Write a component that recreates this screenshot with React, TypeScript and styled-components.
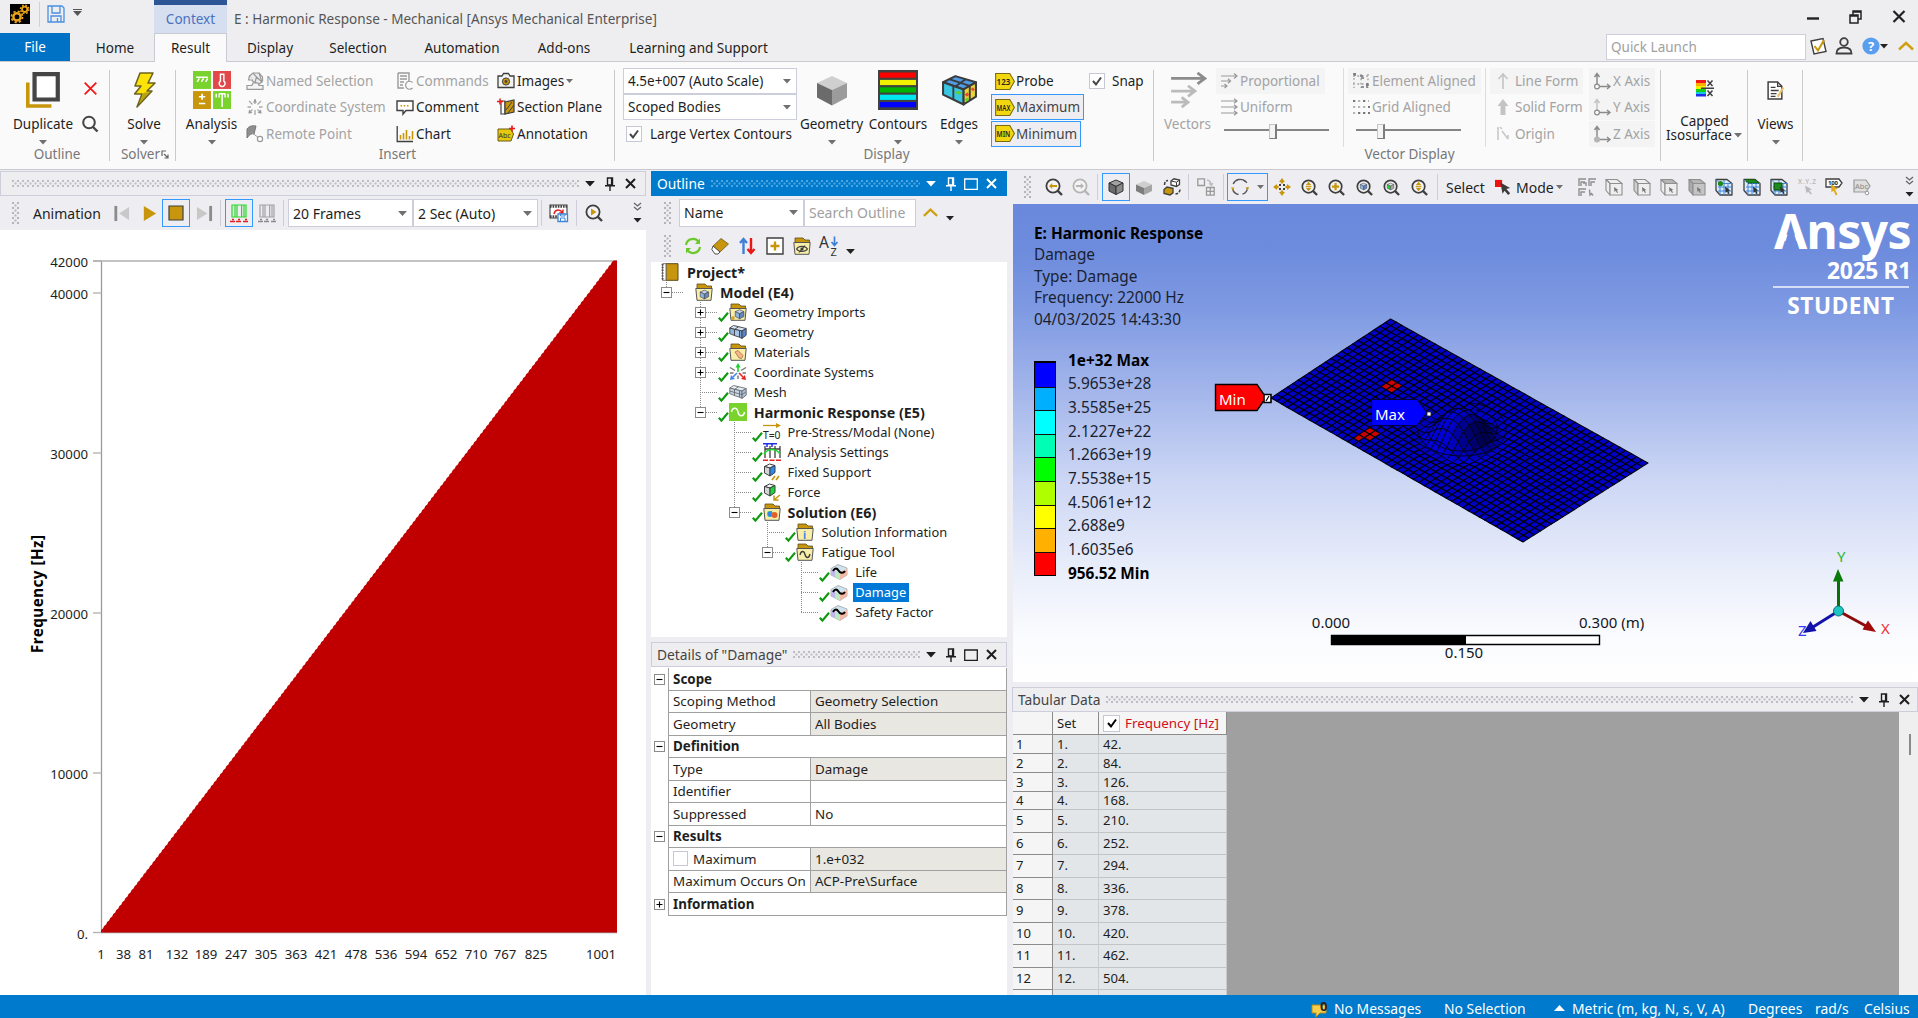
import React from "react";
import styled, { createGlobalStyle, css } from "styled-components";

const UI = `"Noto Sans", "Open Sans", "Liberation Sans", sans-serif`;
const GOLD = "#c8960c";
const INK = "#3f3f3f";
const MUTE = "#a3a3a3";

const Global = createGlobalStyle`
  * { box-sizing: border-box; }
  html, body { margin: 0; padding: 0; }
  body { width: 1918px; height: 1018px; overflow: hidden; background: #eeeef2; font-family: ${UI}; font-size: 13.5px; color: #1e1e1e; }
  svg { display: block; flex: none; overflow: visible; }
`;

/* ---------- icons ---------- */

const Cube = ({ top = "#bdd4f0", left = "#8fb2dd", right = "#5f8ac4", stroke = INK }) => (
  <g stroke={stroke} strokeWidth="1" strokeLinejoin="round">
    <path d="M2 5 9 2 16 5 9 8.5Z" fill={top} />
    <path d="M2 5 9 8.5V16.5L2 13Z" fill={left} />
    <path d="M16 5 9 8.5V16.5L16 13Z" fill={right} />
  </g>
);

const Folder = ({ children }: { children?: React.ReactNode }) => (
  <>
    <path d="M2 1H10L12 3H16.5V6H2Z" fill={GOLD} stroke="#5a4a1a" strokeWidth=".8" />
    <path d="M.8 5.5H17.2L16 17.3H2Z" fill="#f8eeaa" stroke="#555" strokeWidth="1" />
    {children}
  </>
);

const Mag = ({ c = INK, children }: { c?: string; children?: React.ReactNode }) => (
  <>
    <circle cx="8" cy="8" r="6.6" fill="#f3f3f3" stroke={c} strokeWidth="1.8" />
    <path d="M12.6 12.6 17 17" stroke={c} strokeWidth="2.4" />
    {children}
  </>
);

const Tag = ({ children }: { children: string }) => (
  <>
    <path d="M.6 1.5H14L18.4 9 14 16.5H.6Z" fill="#f2d60e" stroke="#7a6a10" strokeWidth="1" />
    <text x="1.5" y="12" fontSize="8" fontWeight="600" fontFamily={UI} fill="#222" textLength="13" lengthAdjust="spacingAndGlyphs">{children}</text>
  </>
);

const SelBox = ({ fill = "#eee", top = "#eee", pick = "" }) => (
  <g stroke="#8f8f8f" strokeWidth="1.1" strokeLinejoin="round">
    <path d="M1 1.5H12L17 5.5H5Z" fill={top} />
    <path d="M1 1.5 5 5.5V17L1 12.5Z" fill={pick || "#eee"} />
    <path d="M5 5.5H17V17H5Z" fill={fill} />
    <path d="M9 9 9.5 14 10.8 12.8 12 15 13 14.4 11.8 12.2 13.4 12Z" fill="#777" stroke="none" />
  </g>
);

const MeshBox = ({ hit }: { hit: "node" | "face" | "elem" }) => (
  <g strokeLinejoin="round">
    <path d="M1 1.5H12L17 5.5V17H5L1 12.5Z" fill="#dcebfa" stroke={INK} strokeWidth="1.3" />
    <path d="M5 5.5H17M5 5.5V17M5 5.5 1 1.5M9 2V17M13 5V17M3 9H17M3 13H17" fill="none" stroke="#3f86d8" strokeWidth="1" />
    {hit === "node" && <circle cx="5.5" cy="5.5" r="2.6" fill="#1c8a1c" />}
    {hit === "face" && <path d="M2 1.5H12L16 5H5Z" fill="#1c8a1c" stroke="#0b4d0b" strokeDasharray="1.5 1" />}
    {hit === "elem" && <path d="M4 5H12V12H4Z" fill="#1c8a1c" stroke="#0b4d0b" />}
    <path d="M10 8.5 10.6 15 12.2 13.4 13.4 16 14.6 15.4 13.4 12.8 15.4 12.6Z" fill="#333" />
  </g>
);

const Wave = () => (
  <>
    <path d="M1 5.5 8 1.5 17 5 17 12 10 16.5 1 12Z" fill="#cfe3ee" stroke="#999" strokeWidth=".7" />
    <path d="M1 5.5V12L5 14V8Z" fill="#c3b6ec" />
    <path d="M10 9V16.5L17 12V6Z" fill="#f3b9a4" />
    <path d="M5 8V14L10 16.5V10Z" fill="#b8ecc0" />
    <path d="M3 8C5 4.5 7 5 8.5 7.5S13 11 15 8" fill="none" stroke="#000" strokeWidth="2" />
  </>
);

const Support = ({ face }: { face: string }) => (
  <g strokeLinejoin="round">
    <path d="M1.5 3.5 6.5 1 12 2.5 7 5Z" fill="#f4f4f4" stroke={INK} />
    <path d="M1.5 3.5V10L7 13V5Z" fill="#d5d5d5" stroke={INK} />
    <path d="M7 5 12 2.5V9.5L7 13Z" fill={face} stroke={INK} />
  </g>
);

const Film = ({ c, b }: { c: string; b: string }) => (
  <>
    <path d="M2 1H16V13H2ZM7 1V13M11.6 1V13M5 1V13M14 1V13" fill="none" stroke={c} strokeWidth="1.2" />
    <path d="M0 17.5H5M6 17.5H11M13 17.5H18M2 15.5H4M8 15.5H10M15 15.5H17" stroke={b} strokeWidth="1.6" />
  </>
);

const AxisArrows = ({ u, dot }: { u: string; dot?: boolean }) => (
  <>
    <path d="M4 14V2M1.5 5 4 1.5 6.5 5" fill="none" stroke={u} strokeWidth="1.5" />
    <path d="M6 14.5H17M14 12 17 14.5 14 17" fill="none" stroke="#8a8a8a" strokeWidth="1.4" />
    <circle cx="4" cy="14.5" r="2.4" fill={dot ? "#b5b5b5" : "#fafafa"} stroke={dot ? "#b5b5b5" : "#8a8a8a"} strokeWidth="1.2" />
  </>
);

const ICONS: Record<string, React.ReactNode> = {
  gears: (
    <>
      <path d="M0 0H18V18H0Z" fill="#000" />
      <circle cx="6.3" cy="11.6" r="3.3" fill="none" stroke="#e8a21c" strokeWidth="2.2" />
      <circle cx="6.3" cy="11.6" r="5" fill="none" stroke="#e8a21c" strokeWidth="1.6" strokeDasharray="2 1.93" />
      <circle cx="13.2" cy="4.8" r="2.4" fill="none" stroke="#e8a21c" strokeWidth="1.6" />
      <circle cx="13.2" cy="4.8" r="3.8" fill="none" stroke="#e8a21c" strokeWidth="1.3" strokeDasharray="1.6 1.4" />
    </>
  ),
  save: (
    <g fill="none" stroke="#4a8fe0" strokeWidth="1.3">
      <path d="M1 1H15L17 3V17H1Z" />
      <path d="M5 1V8H13V1M4 17V11H14V17M10.5 13V17" />
    </g>
  ),
  duplicate: (
    <>
      <path d="M1.8 5.5V16.6H13" fill="none" stroke={GOLD} strokeWidth="1.7" />
      <path d="M5 1.5H16V13.5H5Z" fill="#fff" stroke="#454545" strokeWidth="2" />
    </>
  ),
  redx: <path d="M3.5 3.5 14.5 14.5M14.5 3.5 3.5 14.5" stroke="#f01818" strokeWidth="1.7" />,
  search: (
    <>
      <circle cx="8" cy="7.5" r="5.8" fill="none" stroke="#444" strokeWidth="2" />
      <path d="M12 12 16.5 16.5" stroke="#444" strokeWidth="2.4" />
    </>
  ),
  bolt: (
    <>
      <path d="M7 .5H13.5L11 5.5H14.5L10.5 9.5H13L5.5 17.5 8 11H4.3L7.5 7H4.5Z" fill="#fbe30a" stroke="#6d6320" strokeWidth=".8" strokeLinejoin="round" />
      <path d="M12.2 10 6.6 16 8.8 10.4" fill="#8a7a18" opacity=".6" />
    </>
  ),
  analysis: (
    <>
      <path d="M0 0H8.5V8.5H0Z" fill="#79d32c" />
      <path d="M9.5 0H18V8.5H9.5Z" fill="#e0484a" />
      <path d="M0 9.5H8.5V18H0Z" fill={GOLD} />
      <path d="M9.5 9.5H18V18H9.5Z" fill="#79d32c" />
      <path d="M1.5 3H7M2 5.2 3 3.5M4 5.2 5 3.5M6 5.2 7 3.5" stroke="#fff" strokeWidth=".7" />
      <path d="M13 1.5H14.6V4.8A1.4 1.4 0 1 1 13 4.8Z" fill="none" stroke="#fff" strokeWidth=".7" />
      <path d="M2.8 12.2H5.8M4.3 10.8V13.6M2.8 15.4H5.8" stroke="#fff" strokeWidth=".8" />
      <path d="M11 12.5V10.8M12.4 12.5V10.8M13.8 17V10.8M15.2 12.5V10.8M16.6 12.5V10.8M12.3 10.8H15.3" stroke="#fff" strokeWidth=".7" />
    </>
  ),
  named: (
    <g fill="none" stroke="#999" strokeWidth="1.2">
      <path d="M3.5 4 7 1H13L16 10 13 12 7 9.5Z" fill="#ececec" />
      <path d="M7 1 10.5 5 16 10M10.5 5 9 10.5M13 1 16.5 5V9.5" />
      <path d="M3.5 4 2.5 8H7M1 13.5H6L7 11H12L13 13.5H17V17.3H1Z" fill="#f4f4f4" />
    </g>
  ),
  coord: (
    <>
      <path d="M9 1V6M9 12V17M1.5 9H5M13 9H16.5M3 3 6.5 6.5M15 3 11.5 6.5M3 15 6.5 11.5M15 15 11.5 11.5" stroke="#aaa" strokeWidth="1.4" />
      <path d="M9 1 11 4.5H7ZM2.5 15.5 3 11.5 6.5 15ZM15.5 15.5 11.5 15 15 11.5Z" fill="#999" />
    </>
  ),
  remote: (
    <>
      <path d="M1 4C3 1 6 .5 10 1L8 9C6 8 3 10 1 13Z" fill="#8f8f8f" stroke="#777" />
      <path d="M5 7 13 13" stroke="#999" />
      <circle cx="14" cy="14" r="2.6" fill="#fff" stroke="#999" strokeWidth="1.2" />
    </>
  ),
  commands: (
    <>
      <path d="M2 1H13V9M2 1V16H8M4 4H11M4 7H11M4 10H8M4 13H7" fill="none" stroke="#999" strokeWidth="1.4" />
      <path d="M16.5 10.5A4 4 0 1 0 16.5 16" fill="none" stroke="#999" strokeWidth="1.2" />
    </>
  ),
  comment: (
    <>
      <path d="M1 3H17V12.5H10L7 16V12.5H1Z" fill="#fff" stroke={INK} strokeWidth="1.4" />
      <path d="M4.5 7.7H14" stroke={GOLD} strokeWidth="1.4" strokeDasharray="1.6 1.6" />
    </>
  ),
  chart: (
    <>
      <path d="M1.2 1V16.5H17" fill="none" stroke={INK} strokeWidth="1.3" />
      <path d="M4.5 14.5V10M7.5 14.5V8M10.5 14.5V5M13.5 14.5V11M16.5 14.5V6" stroke={GOLD} strokeWidth="1.6" />
    </>
  ),
  images: (
    <>
      <path d="M1 4H5L6.5 1.5H11.5L13 4H17V15.5H1Z" fill="#f2f2f2" stroke={INK} strokeWidth="1.3" />
      <circle cx="9" cy="9.5" r="3.6" fill={GOLD} stroke={INK} />
      <circle cx="9" cy="9.5" r="1.4" fill="#444" />
    </>
  ),
  section: (
    <>
      <path d="M4 3H8V16H4Z" fill="#fff" stroke={INK} strokeWidth="1.2" />
      <path d="M8 4 17 2V14L8 16Z" fill={GOLD} stroke={INK} strokeWidth="1.2" />
      <path d="M9 12 15 4M11 15 17 7" stroke={INK} />
      <path d="M0 3.5H6M3 .5V6.5" stroke="#f01818" strokeWidth="1.5" />
    </>
  ),
  annotation: (
    <>
      <path d="M1 4H14L16.5 9 14 16H1Z" fill="#e7c70f" stroke="#6b5c10" />
      <text x="1.5" y="12.5" fontSize="7" fontFamily={UI} fill="#333">Abc</text>
      <path d="M12 3.5H18M15 .5V6.5" stroke="#f01818" strokeWidth="1.6" />
    </>
  ),
  geometryBig: (
    <>
      <path d="M1.5 5.5 9 2 16.5 5.5 9 9Z" fill="#cfcfcf" />
      <path d="M1.5 5.5 9 9V16.8L1.5 12.8Z" fill="#6b6b6b" />
      <path d="M16.5 5.5 9 9V16.8L16.5 12.8Z" fill="#9b9b9b" />
    </>
  ),
  edgesBig: (
    <g stroke="#3b3b3b" strokeWidth="1" strokeLinejoin="round">
      <path d="M1 5 7 2 17 5 11 8.5Z" fill="#4e9be6" />
      <path d="M1 5 11 8.5V15.8L1 11Z" fill="#39c6e2" />
      <path d="M11 8.5 17 5V12L11 15.8Z" fill="#e9d43a" />
      <path d="M6 6.8V13.4M4 3.5 14 6.8V13.9M7 7.1 12 3.5" fill="none" strokeWidth=".9" />
      <path d="M12 11.5 13.3 10.5M15 8.8 16 8" stroke="#e34b2a" strokeWidth="1.5" />
      <path d="M12 13.8 13.3 13M7.5 9.6 9.5 10.5" stroke="#5fd02c" strokeWidth="1.5" />
    </g>
  ),
  vectors: (
    <g fill="none" strokeWidth="1.3">
      <path d="M1 3.5H17M13.5.9 17 3.5 13.5 6.1" stroke="#8c8c8c" />
      <path d="M1 9.5H12M9 7 12.3 9.5 9 12" stroke="#bbb" />
      <path d="M1 14.8H8M6 12.5 9 14.8 6 17.1" stroke="#bbb" />
    </g>
  ),
  prop: (
    <g fill="none" stroke="#999" strokeWidth="1.2">
      <path d="M1 4H17M14 1.5 17 4 14 6.5M1 9H10M8 6.8 10.5 9 8 11.2M1 14H6M4.5 12 7 14 4.5 16" />
    </g>
  ),
  uniform: <path d="M1 3H17M14 .8 17 3 14 5.2M1 9H17M14 6.8 17 9 14 11.2M1 15H17M14 12.8 17 15 14 17.2" fill="none" stroke="#999" strokeWidth="1.2" />,
  elem: (
    <>
      <path d="M2 1.5V16M9 2V16M1 4H17M1 12H17M16 2V16" stroke="#b5b5b5" strokeWidth="1.8" strokeDasharray="1.8 2.6" />
      <path d="M1 2H4M3 1V4M8 4H11M9 6H12M14 13H17M15 11V16M9 15H12" stroke="#777" strokeWidth="1.5" />
    </>
  ),
  grid: (
    <>
      <path d="M1 3H17M1 9H17M1 15H17" stroke="#b5b5b5" strokeWidth="2.2" strokeDasharray="2.2 2.8" />
      <path d="M1 3H3.2M6 15H8.2M11 15H13.2M16 15H18M16 9H18M11 3H13.2" stroke="#777" strokeWidth="2.2" />
    </>
  ),
  line: <path d="M9 17V2M4.5 7 9 2 13.5 7" fill="none" stroke="#c4c4c4" strokeWidth="1.6" />,
  solid: <path d="M9 1 14.5 8H11.5V17H6.5V8H3.5Z" fill="#c4c4c4" />,
  origin: <path d="M4 3V15M3 3H5M8 6 14 14M8 4 6 2M14 14V10" fill="none" stroke="#c9c9c9" strokeWidth="1.6" />,
  axisX: <AxisArrows u="#8a8a8a" />,
  axisY: <AxisArrows u="#c4c4c4" />,
  axisZ: <AxisArrows u="#8a8a8a" dot />,
  capped: (
    <>
      <path d="M0 1H10V4H0Z" fill="#f01818" /><path d="M0 4H10V7H0Z" fill="#ffae00" />
      <path d="M0 7H10V10H0Z" fill="#f6f000" /><path d="M0 10H10V13H0Z" fill="#15d015" />
      <path d="M0 13H10V15H0Z" fill="#12c8e0" /><path d="M0 15H10V17.5H0Z" fill="#2030e8" />
      <path d="M5 9.2H18M11.5 1.5 16.5 7M16.5 1.5 11.5 7M11.5 11.5 16.5 17M16.5 11.5 11.5 17" stroke={INK} strokeWidth="1.5" />
    </>
  ),
  views: (
    <>
      <path d="M2 1H11L15 5V17H2Z" fill="#fff" stroke={INK} strokeWidth="1.4" />
      <path d="M11 1V5H15M4.5 6H9M4.5 9H12M4.5 12H10M4.5 14.5H9" fill="none" stroke={INK} strokeWidth="1.2" />
      <path d="M16.5 6 11 15" stroke="#e8c46a" strokeWidth="2" />
    </>
  ),
  tagProbe: <Tag>123</Tag>,
  tagMax: <Tag>MAX</Tag>,
  tagMin: <Tag>MIN</Tag>,
  survey: (
    <>
      <path d="M2 4 14 1.5 17 14.5 5 17Z" fill="#fff" stroke={INK} strokeWidth="1.4" />
      <path d="M5.5 9 9 13.5 15 3" fill="none" stroke={GOLD} strokeWidth="2" />
    </>
  ),
  person: (
    <g fill="none" stroke={INK} strokeWidth="1.8">
      <circle cx="9" cy="5" r="3.8" />
      <path d="M1.5 16.5C1.5 11.5 5 10.5 9 10.5S16.5 11.5 16.5 16.5Z" />
    </g>
  ),
  help: (
    <>
      <circle cx="9" cy="9" r="8.6" fill="#5a9ef0" />
      <text x="9" y="13.8" fontSize="13" fontWeight="700" textAnchor="middle" fontFamily={UI} fill="#fff">?</text>
    </>
  ),
  chevUp: <path d="M2 12.5 9 6 16 12.5" fill="none" stroke="#d0a010" strokeWidth="2.4" />,
  prev: <><path d="M3 1V17" stroke="#8c8c8c" strokeWidth="3" /><path d="M17 2V16L6.5 9Z" fill="#c8c8c8" /></>,
  play: <path d="M3 1V17L16 9Z" fill={GOLD} />,
  stop: <path d="M2 2H16V16H2Z" fill={GOLD} stroke={INK} strokeWidth="1.2" />,
  next: <><path d="M15.5 1V17" stroke="#8c8c8c" strokeWidth="3" /><path d="M1 2V16L12 9Z" fill="#c8c8c8" /></>,
  filmOn: <Film c="#2ad62a" b="#e02020" />,
  filmOff: <Film c="#a2a2a2" b="#8c8c8c" />,
  export: (
    <>
      <path d="M0 1H17V14H0Z" fill="#fff" stroke={INK} strokeWidth="1.1" />
      <path d="M0 2.5H17M0 12.5H8" stroke={INK} strokeWidth="2.6" strokeDasharray="1.6 1" />
      <path d="M4 10C5 5 10 5 12.5 8.5M13 5.5 12.8 9.3 9.3 8.8" fill="none" stroke="#e82020" strokeWidth="1.5" />
      <path d="M8 10H17.5V17.5H8Z" fill="#fff" stroke="#3f86d8" strokeWidth="1.3" /><path d="M10.5 17V14H15V17M10.5 10V12H15V10" fill="none" stroke="#3f86d8" />
    </>
  ),
  zoomPlay: <Mag><path d="M6 4.5V11.5L11.5 8Z" fill={GOLD} /></Mag>,
  refresh: (
    <g fill="none" stroke="#6cc82c" strokeWidth="2.2">
      <path d="M2 8A7 7 0 0 1 15 5.5M16 10A7 7 0 0 1 3 12.5" />
      <path d="M16 1.5V7H11Z M2 16.5V11H7Z" fill="#6cc82c" stroke="none" />
    </g>
  ),
  eraser: (
    <>
      <path d="M10 1.5 17.5 7 9 15 2 9Z" fill={GOLD} stroke="#5a4a1a" strokeWidth=".7" />
      <path d="M2 9 9 15 7 17H4L.8 12.5Z" fill="#fff" stroke={INK} strokeWidth=".9" />
    </>
  ),
  arrows: (
    <>
      <path d="M5.5 17V3M2 6 5.5 2 9 6" fill="none" stroke="#3f7fd8" strokeWidth="2.4" />
      <path d="M13 1V15M9.5 12 13 16 16.5 12" fill="none" stroke="#e81818" strokeWidth="2.4" />
    </>
  ),
  plusBox: (
    <>
      <path d="M1 1H17V17H1Z" fill="#fff" stroke={INK} strokeWidth="1.4" />
      <path d="M9 4.5V13.5M4.5 9H13.5" stroke={GOLD} strokeWidth="2.4" />
    </>
  ),
  folderHide: <Folder><path d="M3.5 12C5.5 8.5 12.5 8.5 14.5 12 12.5 15.2 5.5 15.2 3.5 12ZM6 15.5 12 8.5" fill="none" stroke={INK} strokeWidth="1.1" /><circle cx="9" cy="12" r="1.6" fill={INK} /></Folder>,
  az: (
    <>
      <text x="-1" y="10.5" fontSize="15.5" fontFamily={UI} fill="#333">A</text>
      <text x="10.5" y="18.5" fontSize="11" fontFamily={UI} fill="#333">Z</text>
      <path d="M14.5-.5V8M11.5 5 14.5 8.5 17.5 5" fill="none" stroke="#3f7fd8" strokeWidth="1.7" />
    </>
  ),
  project: (
    <>
      <path d="M5 .7H17V17.3H5Z" fill={GOLD} stroke="#5a4a1a" strokeWidth="1" />
      <path d="M1.5.7H5V17.3H1.5Z" fill="#fff" stroke="#777" />
      <path d="M1.6 1V17" stroke="#555" strokeWidth="2" strokeDasharray="1.4 1.4" />
    </>
  ),
  model: <Folder><g transform="translate(4 6) scale(.6)"><Cube /></g></Folder>,
  geoImports: <Folder><g transform="translate(5 5.5) scale(.62)"><Cube /></g><path d="M2 15H6M4 13V17" stroke={GOLD} strokeWidth="1.2" /></Folder>,
  geometry: (
    <g stroke={INK} strokeWidth=".9" strokeLinejoin="round">
      <path d="M.8 5 4.5 2.5 10 3.8 17.2 5.5 13 8 5.5 6.4Z" fill="#d5e4f7" />
      <path d="M.8 5 5.5 6.4V12.6L.8 10.6Z" fill="#93b6e2" />
      <path d="M5.5 6.4 10.5 7.4V14.2L5.5 12.6Z" fill="#a9c6ea" />
      <path d="M10.5 7.4 13 8V15.4L10.5 14.2Z" fill="#7aa3d8" />
      <path d="M13 8 17.2 5.5V12.2L13 15.4Z" fill="#5585c4" />
      <path d="M5.5 6.4 9.5 3.8" fill="none" />
    </g>
  ),
  materials: <Folder><path d="M6 9 9 7.5 14 12.5 12.5 15.5 10 15Z" fill="#f3b58a" stroke="#b06a3a" strokeWidth=".8" /></Folder>,
  coordSys: (
    <g strokeWidth="1.6" fill="none">
      <path d="M9 9V3" stroke="#1fcf2f" /><path d="M9 0 11.5 4.5H6.5Z" fill="#1fcf2f" />
      <path d="M8 10 4 14" stroke="#3f86e8" /><path d="M1 17 2 12 6 16Z" fill="#3f86e8" />
      <path d="M10 10 14 14" stroke="#e82020" /><path d="M17 17 12 16 16 12Z" fill="#e82020" />
      <path d="M1 4.5 6 7.5M17 4.5 12 7.5M1 10H4.5M13.5 10H17M9 12.5V16" stroke="#777" strokeWidth="1.4" />
    </g>
  ),
  mesh: (
    <g stroke="#6c6c6c" strokeWidth=".9" strokeLinejoin="round">
      <path d="M.8 5 4.5 2.5 10 3.8 17.2 5.5 13 8 5.5 6.4Z" fill="#e4edf8" />
      <path d="M.8 5 5.5 6.4V12.6L.8 10.6Z" fill="#c2d3e8" />
      <path d="M5.5 6.4 10.5 7.4V14.2L5.5 12.6Z" fill="#c9d9ec" />
      <path d="M10.5 7.4 13 8V15.4L10.5 14.2Z" fill="#b4c8e2" />
      <path d="M13 8 17.2 5.5V12.2L13 15.4Z" fill="#a9bfdc" />
      <path d="M5.5 6.4 9.5 3.8M.8 8 5.5 9.5 13 11.6 17.2 8.8" fill="none" />
    </g>
  ),
  harmonic: <><path d="M0 0H18V18H0Z" fill="#79d32c" /><path d="M2.5 9C3.5 4 8 4 9 9S14.5 14 15.5 9" fill="none" stroke="#fff" strokeWidth="1.5" /></>,
  prestress: (
    <>
      <path d="M0 2.5H16" stroke={GOLD} strokeWidth="1.3" /><path d="M13 0 18 2.5 13 5Z" fill={GOLD} />
      <text x="0" y="16" fontSize="10" fontFamily={UI} fill="#222" textLength="17.5" lengthAdjust="spacingAndGlyphs">T=0</text>
    </>
  ),
  settings: (
    <>
      <path d="M2 3V15M7 3V15M12 3V15M17 3V15M2 6H17" fill="none" stroke={INK} strokeWidth="1.3" />
      <path d="M0 .8H14M4 0V4M9 0V4" stroke="#2030e8" strokeWidth="1.5" />
      <path d="M1 11C5 5 13 5 17 11" fill="none" stroke="#1fd62f" strokeWidth="1.6" />
      <path d="M0 17.2H5M6.5 17.2H11.5M13 17.2H18" stroke="#e82020" strokeWidth="1.6" />
    </>
  ),
  fixed: <><Support face="#2b8af0" /><path d="M9 17 12 13M13 17 16 13" stroke={GOLD} strokeWidth="1.7" /></>,
  force: <><Support face="#18d838" /><path d="M17 12 12 16M11 12.5V17H15.5" fill="none" stroke={GOLD} strokeWidth="1.5" /></>,
  solution: <Folder><circle cx="7" cy="11" r="3" fill="#3ccf5a" /><circle cx="11.5" cy="12" r="3" fill="#e2602a" /><path d="M5 9 9 8 8 14 5 13Z" fill="#2b8af0" /></Folder>,
  solInfo: <Folder><text x="7" y="15.5" fontSize="10.5" fontWeight="700" fontFamily={UI} fill="#3f86e8">i</text></Folder>,
  fatigue: <Folder><path d="M4 12C5 7.5 8 7.5 9 11.5S13 15.5 14 11" fill="none" stroke={INK} strokeWidth="1.4" /></Folder>,
  wave: <Wave />,
  zBack: <Mag><path d="M4 8 7.2 5V7H12V9H7.2V11Z" fill={GOLD} /></Mag>,
  zFwd: <Mag c="#b5b5b5"><path d="M12 8 8.8 5V7H4V9H8.8V11Z" fill="#b5b5b5" /></Mag>,
  shadeEdge: <Cube top="#a2a2a2" left="#6b6b6b" right="#8a8a8a" stroke="#333" />,
  shade: <g><path d="M1 6.5 9 3 17 6.5 9 10Z" fill="#cfcfcf" /><path d="M1 6.5 9 10V17L1 13Z" fill="#7d7d7d" /><path d="M17 6.5 9 10V17L17 13Z" fill="#a5a5a5" /></g>,
  cycle: (
    <>
      <path d="M8 3 11 .8 16.5 2V6.5L13.5 8.5 8 7Z" fill="#fff" stroke={INK} strokeWidth="1.3" /><path d="M8 3 13.5 4.2 16.5 2M13.5 4.2V8" fill="none" stroke={INK} />
      <path d="M1 11.5 4 9 10 10.3V14.8L7 17 1 15.5Z" fill={GOLD} stroke={INK} strokeWidth="1.3" />
      <path d="M1.5 7C1.5 4 3 2.8 5 2.5M17 11.5C17 14 15 15.8 12.5 16" fill="none" stroke={INK} strokeWidth="1.5" strokeDasharray="3 1.2" />
    </>
  ),
  explode: (
    <g fill="none" stroke="#999" strokeWidth="1.3">
      <path d="M.8.8H7.5V7.5H.8ZM9.5 9.5H17.2V17.2H9.5ZM13.3 9.5V17.2M9.5 13.3H17.2" /><path d="M10 2C13 2.5 14 4 14.2 7M12.2 5.2 14.3 7.5 16 5" stroke="#bbb" />
    </g>
  ),
  rotate: (
    <>
      <path d="M2.2 6A7.6 7.6 0 0 1 14.5 3.6M16.6 9.5A7.6 7.6 0 0 1 11.5 16.2M7.5 16.5A7.6 7.6 0 0 1 1.6 11" fill="none" stroke="#555" strokeWidth="1.4" />
      <path d="M14.5 9.5 18 9.2 16.8 12.4ZM0 9.5 3.4 9.6 1.8 12.6Z" fill={GOLD} /><path d="M13 2.2 16 4.8" stroke="#555" strokeWidth="1.4" />
    </>
  ),
  pan: (
    <>
      <path d="M9 0 12 4H6ZM9 18 12 14H6ZM0 9 4 6V12ZM18 9 14 6V12Z" fill={GOLD} />
      <path d="M7.7 4H10.3V5.6H7.7ZM7.7 12.4H10.3V14H7.7ZM4 7.7H5.6V10.3H4ZM12.4 7.7H14V10.3H12.4Z" fill={GOLD} />
      <path d="M6 6H8V8H6ZM10 6H12V8H10ZM6 10H8V12H6ZM10 10H12V12H10Z" fill={INK} />
    </>
  ),
  zUpDown: <Mag><path d="M8 3 11 6.7H5ZM8 13 11 9.3H5Z" fill={GOLD} /><path d="M5 8H11" stroke={GOLD} /></Mag>,
  zPlus: <Mag><path d="M8 4.2V11.8M4.2 8H11.8" stroke={GOLD} strokeWidth="2.4" /></Mag>,
  zCube: <Mag><g transform="translate(3.5 3.3) scale(.5)"><Cube /></g></Mag>,
  zFace: <Mag><g transform="translate(3.5 3.3) scale(.5)"><Cube top="#ddd" left="#18d838" right="#aaa" /></g></Mag>,
  mode: (
    <>
      <path d="M0 1H8V9H0Z" fill="#f01010" />
      <path d="M6 4 17 10 12.8 11.3 17 16 14.8 18 10.8 13.2 8.5 16.5Z" fill="#3b3b3b" />
    </>
  ),
  filter: <path d="M1 8V1H8M3 8V4H7M5 5H8V8M11 8V1H18M13 8V4H17M1 18V11H8M3 18V14H7M11.5 11.5 12 17 13.5 15.5 15 17.5" fill="none" stroke="#8f8f8f" strokeWidth="1.4" />,
  selV: <SelBox />,
  selE: <SelBox pick="#cfcfcf" />,
  selF: <SelBox top="#b5b5b5" />,
  selB: <SelBox fill="#c4c4c4" top="#b5b5b5" pick="#aaa" />,
  meshN: <MeshBox hit="node" />,
  meshF: <MeshBox hit="face" />,
  meshE: <MeshBox hit="elem" />,
  xyz: (
    <>
      <text x="0" y="6" fontSize="6.5" fontWeight="600" fontFamily={UI} fill="#b9b9b9" textLength="18">X.Y.Z</text>
      <path d="M7 7.5 14 11.5 11.2 12.2 14 15.5 12.6 16.6 10 13.5 8.5 15.5Z" fill="#b9b9b9" />
    </>
  ),
  tagHit: (
    <>
      <path d="M1 1H14L17 5 14 9H1Z" fill="#fff" stroke={INK} strokeWidth="1.3" />
      <text x="3" y="7.4" fontSize="6" fontWeight="700" fontFamily={UI} fill="#222" textLength="10">100</text>
      <path d="M6 6 13 11 10 11.5 12.5 16.5 10.7 17.5 8.5 12.5 6.5 14.5Z" fill="#e0aa18" />
    </>
  ),
  abc: (
    <>
      <path d="M1 2H13L17 8 13 14H1Z" fill="#dedede" stroke="#999" strokeWidth="1.2" />
      <text x="2" y="11" fontSize="7.5" fontFamily={UI} fill="#888">Abc</text>
      <circle cx="14" cy="15" r="1.8" fill="#fff" stroke="#999" />
    </>
  ),
};

const Icon = ({ n, s = 18 }: { n: string; s?: number }) => (
  <svg width={s} height={s} viewBox="0 0 18 18">{ICONS[n]}</svg>
);

const Caret = ({ c = "#707070", w = 8 }) => (
  <svg width={w} height={w / 2 + 0.5} viewBox="0 0 8 4.5"><path d="M0 0H8L4 4.5Z" fill={c} /></svg>
);

const Overflow = () => (
  <svg width="9" height="22" viewBox="0 0 9 22">
    <path d="M1 1 4.5 4 8 1M1 5 4.5 8 8 5" fill="none" stroke="#666" strokeWidth="1.3" />
    <path d="M.5 16H8.5L4.5 20.5Z" fill="#222" />
  </svg>
);

/* ---------- shared controls ---------- */

const dots = (c: string) => css`
  background-image: radial-gradient(circle at 1px 1px, ${c} 0.9px, transparent 1px), radial-gradient(circle at 1px 1px, ${c} 0.9px, transparent 1px);
  background-size: 5px 5px;
  background-position: 0 0, 2.5px 2.5px;
`;

const Grip = styled.div`
  width: 7px;
  height: 22px;
  ${dots("#b4b4bc")}
`;

const Combo = styled.div<{ $w: number; $h?: number }>`
  display: flex;
  align-items: center;
  justify-content: space-between;
  width: ${(p) => p.$w}px;
  height: ${(p) => p.$h ?? 28}px;
  padding: 0 5px 0 4px;
  border: 1px solid #cccedb;
  background: #fff;
  white-space: nowrap;
`;

const Check = styled.div<{ $size?: number }>`
  display: flex;
  align-items: center;
  justify-content: center;
  flex: none;
  width: ${(p) => p.$size ?? 16}px;
  height: ${(p) => p.$size ?? 16}px;
  border: 1px solid #c6c8d6;
  background: #fff;
`;

const Tick = ({ c = "#444" }) => (
  <svg width="10" height="10" viewBox="0 0 10 10"><path d="M1 5 4 8.5 9 1.5" fill="none" stroke={c} strokeWidth="2" /></svg>
);

/* ---------- title bar and tabs ---------- */

const Page = styled.div`
  display: flex;
  flex-direction: column;
  width: 1918px;
  height: 1018px;
`;

const Caption = styled.header`
  display: flex;
  height: 33px;
  background: #eeeef0;
`;

const QuickAccess = styled.div`
  display: flex;
  align-items: center;
  width: 154px;
  padding: 0 0 5px 10px;
`;

const QuickRule = styled.div`
  width: 1px;
  height: 25px;
  margin: 0 7px 0 9px;
  background: #d0d0d8;
`;

const QuickMore = styled.div`
  display: flex;
  flex-direction: column;
  align-items: center;
  gap: 1px;
  margin: 0 0 3px 8px;
  &::before { content: ""; width: 9px; height: 1.5px; background: #555; }
`;

const ContextTab = styled.div`
  width: 73px;
  padding-top: 4px;
  border-top: 5px solid #2e5596;
  background: #d5dff0;
  color: #4a72bd;
  text-align: center;
  line-height: 20px;
`;

const Title = styled.div`
  flex: 1;
  padding: 9px 0 0 7px;
  line-height: 20px;
  font-size: 13.55px;
  color: #555;
`;

const WindowButtons = styled.div`
  display: flex;
  align-items: center;
  gap: 30px;
  padding: 0 12px 1px 0;
`;

const TabBar = styled.nav`
  display: flex;
  height: 29px;
  border-bottom: 1px solid #c9c9cf;
  background: #eeeef0;
`;

const Tab = styled.div<{ $w: number; $kind?: "file" | "active" }>`
  width: ${(p) => p.$w}px;
  height: 29px;
  line-height: 31px;
  text-align: center;
  white-space: nowrap;
  ${(p) => p.$kind === "file" && css`background: #0072c6; color: #fff; height: 28px; line-height: 29px;`}
  ${(p) => p.$kind === "active" && css`background: #fafafa; border: 1px solid #cacad2; border-bottom: 0; line-height: 29px;`}
`;

const TabTools = styled.div`
  display: flex;
  align-items: center;
  margin-left: auto;
  padding: 0 3px 2px 0;
`;

const QuickLaunch = styled.div`
  width: 200px;
  height: 26px;
  margin: 1px 3px 0 0;
  padding-left: 4px;
  border: 1px solid #cccedb;
  background: #fff;
  line-height: 25px;
  color: #a0a0a0;
`;

const ToolGap = styled.div<{ $w: number }>`
  flex: none;
  width: ${(p) => p.$w}px;
`;

const PanelGap = styled.div<{ $h: number }>`
  flex: none;
  height: ${(p) => p.$h}px;
`;

/* ---------- ribbon ---------- */

const Ribbon = styled.section`
  display: flex;
  height: 108px;
  border-bottom: 1px solid #c9c9cf;
  background: #fafafa;
`;

const Group = styled.div<{ $w: number }>`
  display: flex;
  flex-direction: column;
  width: ${(p) => p.$w}px;
  height: 107px;
  padding-top: 6px;
`;

const GroupRule = styled.div`
  width: 1px;
  height: 91px;
  margin-top: 8px;
  background: #cacaca;
`;

const GroupBody = styled.div<{ $pad?: number }>`
  display: flex;
  height: 79px;
  padding-left: ${(p) => p.$pad ?? 0}px;
`;

const GroupCaption = styled.div`
  display: flex;
  justify-content: center;
  align-items: center;
  gap: 1px;
  line-height: 14px;
  padding-left: 5px;
  color: #777;
`;

const Big = styled.div<{ $w: number; $off?: boolean }>`
  display: flex;
  flex-direction: column;
  align-items: center;
  width: ${(p) => p.$w}px;
  white-space: nowrap;
  color: ${(p) => (p.$off ? MUTE : "#1e1e1e")};
`;

const BigIcon = styled.div`
  display: flex;
  align-items: center;
  height: 44px;
`;

const BigLabel = styled.div<{ $tight?: boolean }>`
  line-height: ${(p) => (p.$tight ? 14 : 24)}px;
  padding-top: ${(p) => (p.$tight ? 5 : 0)}px;
  margin-bottom: ${(p) => (p.$tight ? -5 : 4)}px;
  text-align: center;
`;

const IconColumn = styled.div`
  display: flex;
  flex-direction: column;
  align-items: center;
  gap: 17px;
  width: 26px;
  padding-top: 11px;
`;

const Stack = styled.div<{ $w: number; $ruled?: boolean; $pad?: number }>`
  display: grid;
  grid-template-rows: repeat(3, 26.4px);
  align-content: start;
  width: ${(p) => p.$w}px;
  padding-left: ${(p) => p.$pad ?? 0}px;
  border-right: ${(p) => (p.$ruled ? "1px solid #dcdce6" : "0")};
`;

const Cmd = styled.div<{ $off?: boolean; $pad?: number; $tint?: boolean; $on?: boolean; $gap?: number }>`
  display: flex;
  align-items: center;
  justify-self: start;
  gap: ${(p) => p.$gap ?? 2}px;
  height: 26px;
  padding: 0 ${(p) => p.$pad ?? 0}px;
  white-space: nowrap;
  color: ${(p) => (p.$off ? MUTE : "#1e1e1e")};
  background: ${(p) => (p.$tint ? "#f4f4f5" : "transparent")};
  border: 1px solid transparent;
  border-left-width: ${(p) => (p.$on ? 1 : 0)}px;
  ${(p) => p.$on && css`background: #eeeef2; border-color: #3399ff; color: #444;`}
`;

const Slider = styled.div<{ $at: number; $ml: number }>`
  display: flex;
  align-items: center;
  width: 105px;
  height: 18px;
  margin-left: ${(p) => p.$ml}px;
  background: linear-gradient(#858585, #858585) 0 8px / 100% 2px no-repeat;
  &::before { content: ""; width: 5px; height: 13px; margin: 3px 0 0 ${(p) => p.$at}px; border: 1px solid #c4c4c4; border-right: 2px solid #7d7d7d; border-bottom-color: #7d7d7d; background: #f4f4f4; }
`;

const Contours = () => (
  <svg width="40" height="40" viewBox="0 0 40 40">
    <path d="M0 0H40V40H0Z" fill="#404040" />
    {["#ff0000", "#f2f200", "#00b400", "#00e8f0", "#0000ff"].map((c, i) => (
      <rect key={c} x="2" y={2.5 + i * 7.4} width="36" height="5.2" fill={c} />
    ))}
  </svg>
);

const BigButton = ({ w, icon, size, label, off, caret = true }: { w: number; icon: React.ReactNode | string; size?: number; label: string; off?: boolean; caret?: boolean }) => (
  <Big $w={w} $off={off}>
    <BigIcon>{typeof icon === "string" ? <Icon n={icon} s={size ?? 36} /> : icon}</BigIcon>
    <BigLabel>{label}</BigLabel>
    {caret && <Caret />}
  </Big>
);

const RibbonBar = () => (
  <Ribbon>
    <Group $w={109}>
      <GroupBody $pad={9}>
        <BigButton w={68} icon="duplicate" size={38} label="Duplicate" />
        <IconColumn><Icon n="redx" s={19} /><Icon n="search" s={18} /></IconColumn>
      </GroupBody>
      <GroupCaption>Outline</GroupCaption>
    </Group>
    <GroupRule />
    <Group $w={65}>
      <GroupBody $pad={5}><BigButton w={58} icon="bolt" size={36} label="Solve" /></GroupBody>
      <GroupCaption>
        Solver
        <svg width="8" height="9" viewBox="0 0 8 9"><path d="M1 6V1H5M3 4 7 8M7 4.5V8H3.5" fill="none" stroke="#666" strokeWidth="1.2" /></svg>
      </GroupCaption>
    </Group>
    <GroupRule />
    <Group $w={438}>
      <GroupBody $pad={9}>
        <BigButton w={53} icon="analysis" size={38} label="Analysis" />
        <Stack $w={158} $pad={8}>
          <Cmd $off><Icon n="named" />Named Selection</Cmd>
          <Cmd $off><Icon n="coord" />Coordinate System</Cmd>
          <Cmd $off><Icon n="remote" />Remote Point</Cmd>
        </Stack>
        <Stack $w={101}>
          <Cmd $off><Icon n="commands" />Commands</Cmd>
          <Cmd><Icon n="comment" />Comment</Cmd>
          <Cmd><Icon n="chart" />Chart</Cmd>
        </Stack>
        <Stack $w={115}>
          <Cmd><Icon n="images" />Images<Caret w={7} /></Cmd>
          <Cmd><Icon n="section" />Section Plane</Cmd>
          <Cmd><Icon n="annotation" />Annotation</Cmd>
        </Stack>
      </GroupBody>
      <GroupCaption>Insert</GroupCaption>
    </Group>
    <GroupRule />
    <Group $w={538}>
      <GroupBody $pad={8}>
        <Stack $w={176}>
          <Combo $w={174} $h={26}>4.5e+007 (Auto Scale)<Caret /></Combo>
          <Combo $w={174} $h={26}>Scoped Bodies<Caret /></Combo>
          <Cmd $gap={8} $pad={3}><Check><Tick /></Check>Large Vertex Contours</Cmd>
        </Stack>
        <BigButton w={65} icon="geometryBig" size={36} label="Geometry" />
        <BigButton w={68} icon={<Contours />} label="Contours" />
        <BigButton w={54} icon="edgesBig" size={37} label="Edges" />
        <Stack $w={103} $pad={5}>
          <Cmd $pad={4}><Icon n="tagProbe" s={19} />Probe</Cmd>
          <Cmd $pad={3} $on><Icon n="tagMax" s={19} />Maximum</Cmd>
          <Cmd $pad={3} $on><Icon n="tagMin" s={19} />Minimum</Cmd>
        </Stack>
        <Stack $w={64}><Cmd $gap={7}><Check><Tick /></Check>Snap</Cmd></Stack>
      </GroupBody>
      <GroupCaption>Display</GroupCaption>
    </Group>
    <GroupRule />
    <Group $w={506}>
      <GroupBody $pad={5}>
        <BigButton w={57} icon="vectors" size={38} label="Vectors" off caret={false} />
        <Stack $w={128} $ruled>
          <Cmd $off $tint $pad={4}><Icon n="prop" />Proportional</Cmd>
          <Cmd $off $pad={4}><Icon n="uniform" />Uniform</Cmd>
          <Slider $at={45} $ml={8} />
        </Stack>
        <Stack $w={142} $ruled $pad={4}>
          <Cmd $off $tint $pad={4}><Icon n="elem" />Element Aligned</Cmd>
          <Cmd $off $pad={4}><Icon n="grid" />Grid Aligned</Cmd>
          <Slider $at={21} $ml={8} />
        </Stack>
        <Stack $w={103} $pad={4}>
          <Cmd $off $tint $pad={4} $gap={3}><Icon n="line" />Line Form</Cmd>
          <Cmd $off $pad={4} $gap={3}><Icon n="solid" />Solid Form</Cmd>
          <Cmd $off $pad={4} $gap={3}><Icon n="origin" />Origin</Cmd>
        </Stack>
        <Stack $w={70}>
          <Cmd $off $tint $pad={4}><Icon n="axisX" />X Axis</Cmd>
          <Cmd $off $tint $pad={4}><Icon n="axisY" />Y Axis</Cmd>
          <Cmd $off $tint $pad={4}><Icon n="axisZ" />Z Axis</Cmd>
        </Stack>
      </GroupBody>
      <GroupCaption>Vector Display</GroupCaption>
    </Group>
    <GroupRule />
    <Group $w={86}>
      <GroupBody $pad={1}>
        <Big $w={86}>
          <BigIcon><Icon n="capped" s={18} /></BigIcon>
          <BigLabel $tight>Capped</BigLabel>
          <Cmd $gap={2}>Isosurface<Caret /></Cmd>
        </Big>
      </GroupBody>
    </Group>
    <GroupRule />
    <Group $w={54}>
      <GroupBody $pad={1}><BigButton w={56} icon="views" size={19} label="Views" /></GroupBody>
    </Group>
    <GroupRule />
  </Ribbon>
);

/* ---------- docked panels ---------- */

const Workspace = styled.main`
  display: grid;
  grid-template-columns: 646px 356px 906px;
  column-gap: 5px;
  height: 825px;
  background: #eeeef2;
`;

const Column = styled.div`
  display: flex;
  flex-direction: column;
  min-width: 0;
  min-height: 0;
  padding-top: 1px;
`;

const Header = styled.div<{ $active?: boolean; $edge?: number }>`
  display: flex;
  align-items: center;
  flex: none;
  height: 25px;
  padding: 0 ${(p) => p.$edge ?? 5}px 0 5px;
  border: 1px solid ${(p) => (p.$active ? "#007acc" : "#cccedb")};
  background: ${(p) => (p.$active ? "#007acc" : "#eeeef0")};
  color: ${(p) => (p.$active ? "#fff" : "#444")};
  font-size: 13.8px;
  white-space: nowrap;
`;

const HeaderDots = styled.div<{ $active?: boolean }>`
  flex: 1;
  height: 7px;
  margin: 0 1px 0 6px;
  ${(p) => dots(p.$active ? "#4fa6e0" : "#bdbdc4")}
`;

const HeaderButton = styled.div`
  display: flex;
  justify-content: center;
  width: 20px;
`;

const PanelHeader = ({ title, active, square, edge }: { title?: string; active?: boolean; square?: boolean; edge?: number }) => {
  const c = active ? "#fff" : "#1e1e1e";
  return (
    <Header $active={active} $edge={edge}>
      {title}
      <HeaderDots $active={active} />
      <HeaderButton><Caret c={c} w={10} /></HeaderButton>
      <HeaderButton><svg width="10" height="14" viewBox="0 0 10 14"><path d="M2.5 1H7.5V8H2.5ZM0 8.7H10M5 9V14M6.6 1V8" fill="none" stroke={c} strokeWidth="1.4" /></svg></HeaderButton>
      {square && <HeaderButton><svg width="14" height="12" viewBox="0 0 14 12"><path d="M.7 1H13.3V11.3H.7ZM0 1.2H14" fill="none" stroke={c} strokeWidth="1.3" /></svg></HeaderButton>}
      <HeaderButton><svg width="11" height="11" viewBox="0 0 11 11"><path d="M1 1 10 10M10 1 1 10" stroke={c} strokeWidth="2" /></svg></HeaderButton>
    </Header>
  );
};

const Toolbar = styled.div<{ $h?: number; $pad?: number; $up?: number }>`
  display: flex;
  align-items: center;
  flex: none;
  height: ${(p) => p.$h ?? 34}px;
  padding-left: ${(p) => p.$pad ?? 12}px;
  padding-bottom: ${(p) => p.$up ?? 0}px;
  font-size: 14px;
  white-space: nowrap;
`;

const Slot = styled.div<{ $w: number; $on?: boolean; $low?: boolean }>`
  display: flex;
  align-items: center;
  justify-content: center;
  flex: none;
  gap: 8px;
  width: ${(p) => p.$w}px;
  height: 28px;
  padding-top: ${(p) => (p.$low ? 12 : 0)}px;
  border: ${(p) => (p.$on ? "1px solid #3399ff" : "0")};
`;

const ToolRule = styled.div`
  flex: none;
  width: 1px;
  height: 26px;
  background: #cccedb;
`;

const ToolText = styled.div<{ $w: number }>`
  flex: none;
  width: ${(p) => p.$w}px;
`;

/* ---------- frequency chart ---------- */

const ChartArea = styled.div`
  flex: 1;
  background: #fff;
`;

const Y_TICKS: [string, number][] = [["42000", 262], ["40000", 294], ["30000", 454], ["20000", 614], ["10000", 774], ["0.", 933.5]];
const X_TICKS: [string, number][] = [
  ["1", 101], ["38", 123.5], ["81", 146], ["132", 177], ["189", 206], ["247", 236], ["305", 266], ["363", 296], ["421", 326],
  ["478", 356], ["536", 386], ["594", 416], ["652", 446], ["710", 476], ["767", 505], ["825", 536], ["1001", 601],
];

// The filled region climbs in small steps, one per few result sets.
const wedge = (() => {
  const n = 168;
  let d = "M101 932.5";
  for (let k = 0; k < n; k++) {
    const x = 101 + (514 * k) / n;
    const y = 932.5 - (672 * (k + 1)) / n;
    d += `L${x.toFixed(1)} ${(y + 1.5).toFixed(1)}L${(x + 2).toFixed(1)} ${y.toFixed(1)}`;
  }
  return d + "L617 260.5V932.5Z";
})();

const FrequencyChart = () => (
  <ChartArea>
    <svg width="646" height="765" viewBox="0 230 646 765" fontFamily={UI} fontSize="13.2" fill="#1e1e1e">
      <path d="M101.5 261V932.5H617" fill="none" stroke="#9a9a9a" strokeWidth="1.3" />
      <path d="M93 261H617" stroke="#b0b0b0" strokeWidth="1.3" />
      {Y_TICKS.map(([t, y]) => (
        <g key={t}>
          <path d={`M93 ${y - 1}H102`} stroke="#b0b0b0" strokeWidth="1.3" />
          <text x="88" y={y + 5} textAnchor="end">{t}</text>
        </g>
      ))}
      <path d={wedge} fill="#c00000" />
      {X_TICKS.map(([t, x]) => <text key={t} x={x} y="958.5" textAnchor="middle">{t}</text>)}
      <text transform="translate(43 594) rotate(-90)" textAnchor="middle" fontWeight="700" fontSize="15.2" fill="#000" textLength="118">Frequency [Hz]</text>
    </svg>
  </ChartArea>
);

const ChartColumn = () => (
  <Column>
    <PanelHeader />
    <Toolbar $pad={12}>
      <Grip />
      <ToolGap $w={14} />
      <ToolText $w={73}>Animation</ToolText>
      <Slot $w={30}><Icon n="prev" s={17} /></Slot>
      <Slot $w={26}><Icon n="play" s={17} /></Slot>
      <Slot $w={28} $on><Icon n="stop" s={18} /></Slot>
      <Slot $w={28}><Icon n="next" s={17} /></Slot>
      <ToolGap $w={2} /><ToolRule /><ToolGap $w={4} />
      <Slot $w={28} $on><Icon n="filmOn" /></Slot>
      <Slot $w={28}><Icon n="filmOff" /></Slot>
      <ToolGap $w={2} /><ToolRule /><ToolGap $w={4} />
      <Combo $w={125}>20 Frames<Caret w={9} /></Combo>
      <Combo $w={125}>2 Sec (Auto)<Caret w={9} /></Combo>
      <ToolGap $w={3} /><ToolRule />
      <Slot $w={34}><Icon n="export" /></Slot>
      <ToolRule />
      <Slot $w={34}><Icon n="zoomPlay" /></Slot>
      <ToolGap $w={22} />
      <Overflow />
    </Toolbar>
    <FrequencyChart />
  </Column>
);

/* ---------- outline tree ---------- */

type Node = { t: string; icon: string; level: number; end?: boolean; exp?: "+" | "-"; bold?: boolean; check?: boolean; sel?: boolean };

const TREE: Node[] = [
  { t: "Model (E4)", icon: "model", level: 0, end: true, exp: "-", bold: true, check: false },
  { t: "Geometry Imports", icon: "geoImports", level: 1, exp: "+" },
  { t: "Geometry", icon: "geometry", level: 1, exp: "+" },
  { t: "Materials", icon: "materials", level: 1, exp: "+" },
  { t: "Coordinate Systems", icon: "coordSys", level: 1, exp: "+" },
  { t: "Mesh", icon: "mesh", level: 1 },
  { t: "Harmonic Response (E5)", icon: "harmonic", level: 1, end: true, exp: "-", bold: true },
  { t: "Pre-Stress/Modal (None)", icon: "prestress", level: 2 },
  { t: "Analysis Settings", icon: "settings", level: 2 },
  { t: "Fixed Support", icon: "fixed", level: 2 },
  { t: "Force", icon: "force", level: 2 },
  { t: "Solution (E6)", icon: "solution", level: 2, end: true, exp: "-", bold: true },
  { t: "Solution Information", icon: "solInfo", level: 3 },
  { t: "Fatigue Tool", icon: "fatigue", level: 3, end: true, exp: "-" },
  { t: "Life", icon: "wave", level: 4 },
  { t: "Damage", icon: "wave", level: 4, sel: true },
  { t: "Safety Factor", icon: "wave", level: 4, end: true },
];

const Tree = styled.div`
  height: 375px;
  background: #fff;
`;

const TreeRow = styled.div<{ $level: number }>`
  display: flex;
  align-items: center;
  height: 20.04px;
  padding-left: ${(p) => 10 + p.$level * 33.8}px;
  white-space: nowrap;
  color: #1e1e1e;
`;

const Branch = styled.div<{ $end?: boolean }>`
  display: flex;
  align-items: center;
  flex: none;
  width: 34px;
  height: 100%;
  background:
    repeating-linear-gradient(#8a8a8a 0 1px, transparent 1px 2px) 5px 0 / 1px ${(p) => (p.$end ? "50%" : "100%")} no-repeat,
    repeating-linear-gradient(90deg, #8a8a8a 0 1px, transparent 1px 2px) 5px 50% / 18px 1px no-repeat;
`;

const Expander = styled.div`
  display: flex;
  align-items: center;
  justify-content: center;
  width: 11px;
  height: 11px;
  border: 1px solid #8c8c8c;
  background: #fff;
`;

const Sign = ({ s }: { s: "+" | "-" }) => (
  <svg width="7" height="7" viewBox="0 0 7 7"><path d={s === "+" ? "M.5 3.5H6.5M3.5.5V6.5" : "M.5 3.5H6.5"} stroke="#000" strokeWidth="1.1" /></svg>
);

const CheckSlot = styled.div`
  margin: 9px 0 0 auto;
`;

const NodeText = styled.span<{ $bold?: boolean; $sel?: boolean }>`
  margin-left: 5px;
  padding: 0 3px 0 2px;
  line-height: 19px;
  font-weight: ${(p) => (p.$bold ? 700 : 400)};
  font-size: ${(p) => (p.$bold ? 14.3 : 12.85)}px;
  color: ${(p) => (p.$sel ? "#fff" : "#1e1e1e")};
  background: ${(p) => (p.$sel ? "#0078d7" : "transparent")};
`;

const SearchBox = styled.div`
  width: 112px;
  height: 28px;
  padding-left: 4px;
  border: 1px solid #cccedb;
  background: #fff;
  line-height: 26px;
  color: #a0a0a0;
`;

const OutlinePanel = () => (
  <>
    <PanelHeader title="Outline" active square />
    <Toolbar $pad={13} $h={33}>
      <Grip /><ToolGap $w={8} />
      <Combo $w={125}>Name<Caret w={9} /></Combo>
      <SearchBox>Search Outline</SearchBox>
      <Slot $w={28}><Icon n="chevUp" s={17} /></Slot>
      <Slot $w={12} $low><Caret c="#222" /></Slot>
    </Toolbar>
    <Toolbar $pad={13} $h={33}>
      <Grip /><ToolGap $w={8} />
      <Slot $w={27}><Icon n="refresh" /></Slot>
      <Slot $w={27}><Icon n="eraser" /></Slot>
      <Slot $w={28}><Icon n="arrows" /></Slot>
      <Slot $w={27}><Icon n="plusBox" /></Slot>
      <Slot $w={27}><Icon n="folderHide" /></Slot>
      <Slot $w={28}><Icon n="az" /></Slot>
      <Slot $w={14} $low><Caret c="#222" w={9} /></Slot>
    </Toolbar>
    <Tree>
      <TreeRow $level={0}><Icon n="project" /><ToolGap $w={1} /><NodeText $bold>Project*</NodeText></TreeRow>
      {TREE.map((n) => (
        <TreeRow key={n.t} $level={n.level}>
          <Branch $end={n.end}>
            {n.exp && <Expander><Sign s={n.exp} /></Expander>}
            {n.check !== false && (
              <CheckSlot><svg width="11" height="10" viewBox="0 0 11 10"><path d="M.8 5.8 3.4 8.6 10 .8" fill="none" stroke="#119a11" strokeWidth="2.2" /></svg></CheckSlot>
            )}
          </Branch>
          <Icon n={n.icon} />
          <NodeText $bold={n.bold} $sel={n.sel}>{n.t}</NodeText>
        </TreeRow>
      ))}
    </Tree>
  </>
);

/* ---------- details grid ---------- */

type Detail = { k: string; v?: string; head?: "+" | "-"; white?: boolean; box?: boolean };

const DETAILS: Detail[] = [
  { k: "Scope", head: "-" },
  { k: "Scoping Method", v: "Geometry Selection" },
  { k: "Geometry", v: "All Bodies" },
  { k: "Definition", head: "-" },
  { k: "Type", v: "Damage" },
  { k: "Identifier", v: "", white: true },
  { k: "Suppressed", v: "No", white: true },
  { k: "Results", head: "-" },
  { k: "Maximum", v: "1.e+032", box: true },
  { k: "Maximum Occurs On", v: "ACP-Pre\\Surface" },
  { k: "Information", head: "+" },
];

const Details = styled.div`
  flex: 1;
  padding-top: 1px;
  background: #fff;
`;

const DetailRow = styled.div`
  display: grid;
  grid-template-columns: 17px 1fr;
  height: 22.5px;
`;

const Margin = styled.div`
  display: flex;
  align-items: center;
  padding-left: 3px;
`;

const Cells = styled.div<{ $head?: boolean }>`
  display: grid;
  grid-template-columns: ${(p) => (p.$head ? "1fr" : "141px 1fr")};
  border: 1px solid #a0a0a0;
  border-top: 0;
`;

const Cell = styled.div<{ $value?: boolean; $white?: boolean; $head?: boolean }>`
  display: flex;
  align-items: center;
  gap: 5px;
  padding-left: 4px;
  border-left: ${(p) => (p.$value ? "1px solid #a0a0a0" : "0")};
  background: ${(p) => (p.$value && !p.$white ? "#e8e7e2" : "#fff")};
  font-weight: ${(p) => (p.$head ? 700 : 400)};
  font-size: 13.4px;
  line-height: 20px;
  white-space: nowrap;
`;

const DetailsPanel = () => (
  <>
    <PanelGap $h={5} />
    <PanelHeader title={'Details of "Damage"'} square />
    <Details>
      {DETAILS.map((d) => (
        <DetailRow key={d.k}>
          <Margin>{d.head && <Expander><Sign s={d.head} /></Expander>}</Margin>
          <Cells $head={!!d.head}>
            <Cell $head={!!d.head}>{d.box && <Check $size={15} />}{d.k}</Cell>
            {!d.head && <Cell $value $white={d.white}>{d.v}</Cell>}
          </Cells>
        </DetailRow>
      ))}
    </Details>
  </>
);

/* ---------- 3D view ---------- */

const Viewport = styled.div`
  position: relative;
  flex: none;
  height: 478px;
  margin-left: 1px;
  background: linear-gradient(#6a89dc 0%, #6e8cdd 10%, #7f9ae3 22%, #a5b7eb 40%, #cdd7f5 58%, #e8edfa 76%, #fafbfe 90%, #ffffff 100%);
`;

const Overlay = styled.div<{ $x: number; $y: number }>`
  position: absolute;
  left: ${(p) => p.$x}px;
  top: ${(p) => p.$y}px;
  white-space: nowrap;
  color: #14161c;
`;

const InfoLine = styled.div<{ $bold?: boolean }>`
  height: 21.4px;
  line-height: 21px;
  font-size: 15.4px;
  font-weight: ${(p) => (p.$bold ? 700 : 400)};
  color: ${(p) => (p.$bold ? "#000" : "#1a1f30")};
`;

const LegendLine = styled(InfoLine)`
  height: 23.7px;
  line-height: 23.7px;
`;

const Swatches = styled.div`
  width: 22px;
  border: 1.5px solid #000;
  border-top-width: 2px;
`;

const Swatch = styled.div<{ $c: string }>`
  height: 23.6px;
  background: ${(p) => p.$c};
  & + & { border-top: 1px solid #111; }
`;

const Logo = styled.div`
  position: absolute;
  right: 7px;
  top: 0;
  display: flex;
  flex-direction: column;
  align-items: flex-end;
  width: 138px;
  color: #fff;
  font-weight: 700;
`;

const LogoName = styled.div`
  position: relative;
  height: 54px;
  line-height: 54px;
  font-size: 48px;
  letter-spacing: -0.6px;

  /* opens the crossbar of the first letter into a plain chevron */
  &::after {
    content: "";
    position: absolute;
    left: 9px;
    top: 19px;
    width: 16px;
    height: 27px;
    background: linear-gradient(#6b8add, #6c8bdd);
    clip-path: polygon(50% 0, 100% 100%, 0 100%);
  }
`;

const LogoVersion = styled.div`
  height: 28px;
  line-height: 26px;
  font-size: 22.8px;
  letter-spacing: -0.3px;
`;

const LogoEdition = styled.div`
  align-self: stretch;
  margin-right: 2px;
  border-top: 2px solid #d4ddf5;
  padding-top: 5px;
  line-height: 26px;
  text-align: center;
  font-size: 22.6px;
  letter-spacing: 0.6px;
`;

const CORNERS = { l: [1271, 398], t: [1390.5, 319], r: [1648, 463], b: [1523, 542] };
const NU = 22;
const NV = 46;
const HOT = ["11,9", "12,9", "11,10", "12,10", "2,14", "3,14", "2,15", "3,15", "1,14"];

const away = (i: number, j: number) => Math.hypot(i - 10.4, (j - 24) * 0.92);

// Vertical lift of the plate over the dome, in pixels, with a shallow trough around its foot.
const lift = (i: number, j: number) => {
  const r = away(i, j);
  return 23 * Math.exp(-Math.pow(r / 3.1, 3)) - 2.5 * Math.exp(-Math.pow(r - 4.6, 2) / 1.4);
};

const project = (i: number, j: number): [number, number] => {
  const u = i / NU;
  const v = j / NV;
  const mix = (k: number) =>
    CORNERS.l[k] * (1 - u) * (1 - v) + CORNERS.t[k] * u * (1 - v) + CORNERS.b[k] * (1 - u) * v + CORNERS.r[k] * u * v;
  return [mix(0), mix(1) - lift(i, j)];
};

const plate = (() => {
  const out: { key: string; d: string; fill: string; edge: number }[] = [];
  for (let i = NU - 1; i >= 0; i--) {
    for (let j = 0; j < NV; j++) {
      const p = [project(i, j), project(i + 1, j), project(i + 1, j + 1), project(i, j + 1)];
      const slopeV = lift(i, j + 1) - lift(i, j);
      const slopeU = lift(i + 1, j) - lift(i, j);
      const near = away(i + 0.5, j + 0.5) < 5.5;
      const tone = Math.max(60, Math.min(215, 200 + slopeV * 14 + (near ? slopeU * 3 : 0)));
      out.push({
        key: `${i},${j}`,
        d: "M" + p.map((q) => q.map((n) => n.toFixed(1)).join(" ")).join("L") + "Z",
        fill: HOT.includes(`${i},${j}`) ? "#d00000" : `rgb(0,0,${Math.round(tone)})`,
        edge: near ? 0.8 : 1.1,
      });
    }
  }
  return out;
})();

const Scene = () => (
  <svg width="905" height="478" viewBox="1013 204 905 478" fontFamily={UI}>
    {plate.map((q) => <path key={q.key} d={q.d} fill={q.fill} stroke="#00000c" strokeWidth={q.edge} strokeLinejoin="round" />)}
    <path d="M1418 431C1420 447 1438 456 1462 456S1505 446 1506 430 1488 405 1470 403M1428 432C1430 444 1444 451 1462 451S1496 443 1497 430 1486 413 1476 410" fill="none" stroke="#000018" strokeWidth=".9" />
    <path d="M1215.5 384.5H1257L1266 397.5 1257 410.5H1215.5Z" fill="#ff0000" stroke="#000" strokeWidth="1.4" />
    <path d="M1264 394.5H1271V402.5H1264Z" fill="#fff" stroke="#000" strokeWidth="1.6" />
    <path d="M1266 401 1269 396" stroke="#000" strokeWidth="1.2" />
    <text x="1219" y="404.5" fontSize="15" fill="#fff">Min</text>
    <path d="M1371.5 399.5H1417L1427 412.5 1417 425.5H1371.5Z" fill="#0000ff" stroke="#000040" strokeWidth="1.2" />
    <path d="M1427 412H1431V416H1427Z" fill="#fff" stroke="#222" strokeWidth=".8" />
    <text x="1375" y="419.5" fontSize="15" fill="#fff">Max</text>
    <path d="M1331.5 635.5H1599.5V644.5H1331.5Z" fill="#fff" stroke="#000" strokeWidth="1.4" />
    <path d="M1331 635H1466V645H1331Z" fill="#000" />
    <g fontSize="15" fill="#14161c">
      <text x="1331" y="628" textAnchor="middle">0.000</text>
      <text x="1464" y="658" textAnchor="middle">0.150</text>
      <text x="1579" y="628">0.300 (m)</text>
    </g>
    <path d="M1838.5 611V580" stroke="#0a6e0a" strokeWidth="3" />
    <path d="M1833 581.5 1838 569 1843.5 581.5Z" fill="#0a7a0a" />
    <path d="M1838.5 611 1866 626" stroke="#8c0a0a" strokeWidth="3" />
    <path d="M1876 632 1862.5 629.5 1868 620.5Z" fill="#a00a0a" />
    <path d="M1838.5 611 1813 627" stroke="#1212a8" strokeWidth="3" />
    <path d="M1803 633 1810.5 621 1816.5 631Z" fill="#1212a8" />
    <circle cx="1838.5" cy="611" r="5" fill="#1cc4c4" stroke="#0a7070" />
    <g fontSize="15">
      <text x="1837" y="561.5" fill="#2fb52f">Y</text>
      <text x="1881" y="633.5" fill="#f03030">X</text>
      <text x="1798" y="635.5" fill="#3a3af0">Z</text>
    </g>
  </svg>
);

const LEGEND = ["1e+32 Max", "5.9653e+28", "3.5585e+25", "2.1227e+22", "1.2663e+19", "7.5538e+15", "4.5061e+12", "2.688e9", "1.6035e6", "956.52 Min"];
const COLORS = ["#0000ff", "#00b0ff", "#00ffff", "#00ffb4", "#00ff00", "#b0ff00", "#ffff00", "#ffb000", "#ff0000"];

const ViewToolbar = () => (
  <Toolbar $h={33} $pad={12} $up={1}>
    <Grip /><ToolGap $w={9} />
    <Slot $w={27}><Icon n="zBack" /></Slot>
    <Slot $w={28}><Icon n="zFwd" /></Slot>
    <ToolGap $w={2} /><ToolRule /><ToolGap $w={4} />
    <Slot $w={28} $on><Icon n="shadeEdge" /></Slot>
    <Slot $w={28}><Icon n="shade" /></Slot>
    <Slot $w={27}><Icon n="cycle" /></Slot>
    <ToolGap $w={3} /><ToolRule />
    <Slot $w={34}><Icon n="explode" /></Slot>
    <ToolRule /><ToolGap $w={3} />
    <Slot $w={41} $on><Icon n="rotate" /><Caret w={7} /></Slot>
    <Slot $w={28}><Icon n="pan" /></Slot>
    <Slot $w={27}><Icon n="zUpDown" s={17} /></Slot>
    <Slot $w={27}><Icon n="zPlus" s={17} /></Slot>
    <Slot $w={28}><Icon n="zCube" s={17} /></Slot>
    <Slot $w={27}><Icon n="zFace" s={17} /></Slot>
    <Slot $w={28}><Icon n="zUpDown" s={17} /></Slot>
    <ToolGap $w={4} /><ToolRule /><ToolGap $w={8} />
    <ToolText $w={49}>Select</ToolText>
    <Icon n="mode" s={16} />
    <ToolGap $w={5} />
    <ToolText $w={40}>Mode</ToolText>
    <Caret w={7} />
    <ToolGap $w={10} />
    {["filter", "selV", "selE", "selF", "selB", "meshN", "meshF", "meshE", "xyz", "tagHit", "abc"].map((n) => (
      <Slot key={n} $w={27.5}><Icon n={n} /></Slot>
    ))}
    <ToolGap $w={29} />
    <Overflow />
  </Toolbar>
);

const ViewPanel = () => (
  <Viewport>
    <Scene />
    <Overlay $x={21} $y={19}>
      <InfoLine $bold>E: Harmonic Response</InfoLine>
      <InfoLine>Damage</InfoLine>
      <InfoLine>Type: Damage</InfoLine>
      <InfoLine>Frequency: 22000 Hz</InfoLine>
      <InfoLine>04/03/2025 14:43:30</InfoLine>
    </Overlay>
    <Overlay $x={20.5} $y={157}>
      <Swatches>{COLORS.map((c) => <Swatch key={c} $c={c} />)}</Swatches>
    </Overlay>
    <Overlay $x={55} $y={144.5}>
      {LEGEND.map((t, i) => <LegendLine key={t} $bold={i === 0 || i === 9}>{t}</LegendLine>)}
    </Overlay>
    <Logo>
      <LogoName>Ansys</LogoName>
      <LogoVersion>2025 R1</LogoVersion>
      <LogoEdition>STUDENT</LogoEdition>
    </Logo>
  </Viewport>
);

/* ---------- tabular data ---------- */

const TableArea = styled.div`
  display: grid;
  grid-template-columns: 214px 672px 1fr;
  flex: 1;
  min-height: 0;
  margin-left: 1px;
  overflow: hidden;
`;

const Sheet = styled.div`
  background: #e2e6e9;
`;

const SheetRow = styled.div<{ $h: number }>`
  display: grid;
  grid-template-columns: 40px 46px 128px;
  height: ${(p) => p.$h}px;
  font-size: 13.1px;
`;

const SheetCell = styled.div<{ $kind: "index" | "head" | "data" }>`
  display: flex;
  align-items: center;
  gap: 5px;
  padding-left: ${(p) => (p.$kind === "index" ? 3 : 4)}px;
  border-right: 1px solid ${(p) => (p.$kind === "data" ? "#c9cccf" : "#8c8c8c")};
  border-bottom: 1.5px solid ${(p) => (p.$kind === "data" ? "#c2c4c6" : "#8c8c8c")};
  background: ${(p) => (p.$kind === "data" ? "#e2e6e9" : "#f5f5f5")};
  line-height: 17px;
  white-space: nowrap;
`;

const RedText = styled.span`
  color: #d01018;
  font-size: 13.4px;
`;

const Backdrop = styled.div`
  background: #a0a0a0;
`;

const ScrollTrack = styled.div`
  display: flex;
  justify-content: center;
  padding: 22px 0 0 3px;
  background: #efefef;
  &::before { content: ""; width: 2px; height: 21px; background: #8a8a8a; }
`;

const ROWS = Array.from({ length: 13 }, (_, k) => k + 1);

const Tabular = () => (
  <>
    <PanelGap $h={5} />
    <PanelHeader title="Tabular Data" edge={3} />
    <TableArea>
      <Sheet>
        <SheetRow $h={23}>
          <SheetCell $kind="index" />
          <SheetCell $kind="head">Set</SheetCell>
          <SheetCell $kind="head"><Check $size={17}><Tick c="#000" /></Check><RedText>Frequency [Hz]</RedText></SheetCell>
        </SheetRow>
        {ROWS.map((r) => (
          <SheetRow key={r} $h={r < 4 ? 19 : r === 4 ? 18 : 22.5}>
            <SheetCell $kind="index">{r < 13 ? r : ""}</SheetCell>
            <SheetCell $kind="data">{r < 13 ? `${r}.` : ""}</SheetCell>
            <SheetCell $kind="data">{r < 13 ? `${r * 42}.` : ""}</SheetCell>
          </SheetRow>
        ))}
      </Sheet>
      <Backdrop />
      <ScrollTrack />
    </TableArea>
  </>
);

/* ---------- status bar ---------- */

const Status = styled.footer`
  display: flex;
  align-items: center;
  justify-content: flex-end;
  height: 23px;
  padding: 3px 8px 0 0;
  background: #007acc;
  color: #fff;
  font-size: 13.9px;
  white-space: nowrap;
`;

const StatusItem = styled.span<{ $w: number }>`
  flex: none;
  width: ${(p) => p.$w}px;
`;

const App = () => (
  <Page>
    <Global />
    <Caption>
      <QuickAccess>
        <Icon n="gears" s={20} />
        <QuickRule />
        <Icon n="save" s={18} />
        <QuickMore><Caret c="#555" w={9} /></QuickMore>
      </QuickAccess>
      <ContextTab>Context</ContextTab>
      <Title>E : Harmonic Response - Mechanical [Ansys Mechanical Enterprise]</Title>
      <WindowButtons>
        <svg width="12" height="12" viewBox="0 0 12 12"><path d="M0 8.5H12" stroke="#222" strokeWidth="2.4" /></svg>
        <svg width="13" height="14" viewBox="0 0 13 14"><path d="M1 6H9V14H1ZM1 7H9M4 6V2H12V10H9M4 3H12" fill="none" stroke="#222" strokeWidth="1.5" /></svg>
        <svg width="14" height="13" viewBox="0 0 14 13"><path d="M1.5 1 12.5 12M12.5 1 1.5 12" stroke="#222" strokeWidth="2.2" /></svg>
      </WindowButtons>
    </Caption>
    <TabBar>
      <Tab $w={70} $kind="file">File</Tab>
      <ToolGap $w={8} />
      <Tab $w={74}>Home</Tab>
      <ToolGap $w={2} />
      <Tab $w={73} $kind="active">Result</Tab>
      <Tab $w={86}>Display</Tab>
      <Tab $w={90}>Selection</Tab>
      <Tab $w={118}>Automation</Tab>
      <Tab $w={86}>Add-ons</Tab>
      <Tab $w={183}>Learning and Support</Tab>
      <TabTools>
        <QuickLaunch>Quick Launch</QuickLaunch>
        <Icon n="survey" s={18} /><ToolGap $w={8} />
        <Icon n="person" s={18} /><ToolGap $w={9} />
        <Icon n="help" s={18} /><Caret c="#222" /><ToolGap $w={9} />
        <Icon n="chevUp" s={18} />
      </TabTools>
    </TabBar>
    <RibbonBar />
    <Workspace>
      <ChartColumn />
      <Column>
        <OutlinePanel />
        <DetailsPanel />
      </Column>
      <Column>
        <ViewToolbar />
        <ViewPanel />
        <Tabular />
      </Column>
    </Workspace>
    <Status>
      <svg width="21" height="19" viewBox="0 0 21 19">
        <path d="M1 6H15V14H9L5 18V14H1Z" fill="#f5cf4a" stroke="#b58c1a" />
        <text x="9" y="12" fontSize="13" fontWeight="700" fontFamily={UI} fill="#222">0</text>
      </svg>
      <ToolGap $w={2} />
      <StatusItem $w={110}>No Messages</StatusItem>
      <StatusItem $w={110}>No Selection</StatusItem>
      <svg width="11" height="7" viewBox="0 0 11 7"><path d="M0 6 5.5 0 11 6Z" fill="#fff" /></svg>
      <ToolGap $w={7} />
      <StatusItem $w={176}>Metric (m, kg, N, s, V, A)</StatusItem>
      <StatusItem $w={67}>Degrees</StatusItem>
      <StatusItem $w={49}>rad/s</StatusItem>
      <StatusItem $w={46}>Celsius</StatusItem>
    </Status>
  </Page>
);

export default App;
